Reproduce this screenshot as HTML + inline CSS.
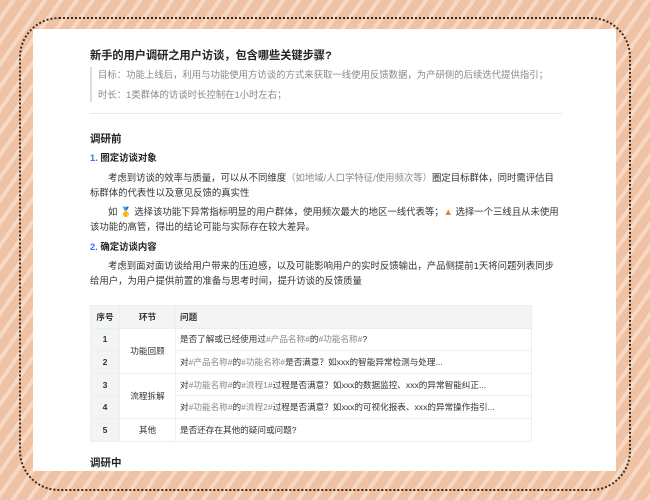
<!DOCTYPE html>
<html><head><meta charset="utf-8"><style>
*{margin:0;padding:0;box-sizing:border-box}
body{width:650px;height:500px;overflow:hidden;position:relative;font-family:"Liberation Sans","Noto Sans CJK SC",sans-serif;
background:repeating-linear-gradient(125deg,#efc2a3 0 9px,#f6d8c3 9px 13px);}
.border{position:absolute;left:19px;top:17px;width:612px;height:474px;border:2px dotted #3a2a22;border-radius:40px;}
.card{position:absolute;left:33px;top:29px;width:583px;height:442px;background:#fff;}
.t{position:absolute;left:57px;white-space:nowrap;color:#333;font-size:9.4px;line-height:14px}
h1{position:absolute;left:57px;top:19px;font-size:11.2px;line-height:16px;color:#222;font-weight:bold}
.bq{position:absolute;left:57px;top:38px;width:2px;height:35px;background:#ddd}
.g{color:#888}
.hr{position:absolute;left:57px;top:84px;width:472px;height:1px;background:#e8e8e8}
.h2{font-size:10.5px;font-weight:bold;color:#222}
.h3{font-weight:bold;color:#222}
.n{color:#3370ff}
table{position:absolute;left:57px;top:276px;border-collapse:collapse;font-size:8.6px;color:#333;table-layout:fixed;width:442px}
td,th{border:1px solid #eceeef;height:22.6px;padding:0 4px;white-space:nowrap;overflow:hidden}
th{background:#f3f4f5;text-align:left;font-weight:bold}
td.c{background:#f3f4f5;text-align:center;font-weight:bold}
.cc{text-align:center}
</style></head><body>
<div class="border"></div>
<div class="card">
<h1>新手的用户调研之用户访谈，包含哪些关键步骤?</h1>
<div class="bq"></div>
<div class="t g" style="left:65px;top:39px">目标：功能上线后，利用与功能使用方访谈的方式来获取一线使用反馈数据，为产研侧的后续迭代提供指引；</div>
<div class="t g" style="left:65px;top:59px">时长：1类群体的访谈时长控制在1小时左右；</div>
<div class="hr"></div>
<div class="t h2" style="top:103px">调研前</div>
<div class="t h3" style="top:122px"><span class="n">1.</span> 圈定访谈对象</div>
<div class="t" style="top:142px;left:75px">考虑到访谈的效率与质量，可以从不同维度<span class="g">（如地域/人口学特征/使用频次等）</span>圈定目标群体，同时需评估目</div>
<div class="t" style="top:157px">标群体的代表性以及意见反馈的真实性</div>
<div class="t" style="top:176px;left:75px">如 <span style="color:#e8a33a">🥇</span> 选择该功能下异常指标明显的用户群体，使用频次最大的地区一线代表等；<span style="color:#e67a2e">▲</span> 选择一个三线且从未使用</div>
<div class="t" style="top:191px">该功能的高管，得出的结论可能与实际存在较大差异。</div>
<div class="t h3" style="top:211px"><span class="n">2.</span> 确定访谈内容</div>
<div class="t" style="top:230px;left:75px">考虑到面对面访谈给用户带来的压迫感，以及可能影响用户的实时反馈输出，产品侧提前1天将问题列表同步</div>
<div class="t" style="top:245px">给用户，为用户提供前置的准备与思考时间，提升访谈的反馈质量</div>
<table>
<tr><th style="width:29px;text-align:center">序号</th><th style="width:56px;text-align:center">环节</th><th>问题</th></tr>
<tr><td class="c">1</td><td rowspan="2" class="cc">功能回顾</td><td>是否了解或已经使用过<span class="g">#产品名称#</span>的<span class="g">#功能名称#</span>?</td></tr>
<tr><td class="c">2</td><td>对<span class="g">#产品名称#</span>的<span class="g">#功能名称#</span>是否满意？如xxx的智能异常检测与处理...</td></tr>
<tr><td class="c">3</td><td rowspan="2" class="cc">流程拆解</td><td>对<span class="g">#功能名称#</span>的<span class="g">#流程1#</span>过程是否满意？如xxx的数据监控、xxx的异常智能纠正...</td></tr>
<tr><td class="c">4</td><td>对<span class="g">#功能名称#</span>的<span class="g">#流程2#</span>过程是否满意？如xxx的可视化报表、xxx的异常操作指引...</td></tr>
<tr><td class="c">5</td><td class="cc">其他</td><td>是否还存在其他的疑问或问题?</td></tr>
</table>
<div class="t h2" style="top:427px">调研中</div>
</div>
</body></html>
